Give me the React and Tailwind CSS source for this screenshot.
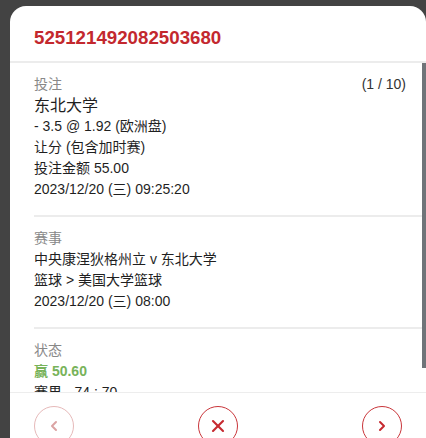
import { X, ChevronLeft, ChevronRight } from 'lucide-react'

const font = { fontFamily: '"Liberation Sans", "Noto Sans CJK SC", sans-serif' }

function Section({ label, right, children, last }) {
  return (
    <div className={`pt-[11px] pb-[15px] pr-[16px] ${last ? '' : 'border-b-2 border-[#ececec]'}`}>
      <div className="flex justify-between text-[14px] leading-[21px]">
        <span className="text-[#888]">{label}</span>
        {right && <span className="text-[#333]">{right}</span>}
      </div>
      <div className="text-[14px] leading-[21px] text-[#1f1f1f]">{children}</div>
    </div>
  )
}

function RoundBtn({ children, faded }) {
  return (
    <button
      className={`w-[40px] h-[40px] rounded-full border flex items-center justify-center ${
        faded ? 'border-[#e6b9b9] text-[#dba3a3]' : 'border-[#c9353a] text-[#c62a30]'
      }`}
    >
      {children}
    </button>
  )
}

export default function App() {
  return (
    <div className="h-[438px] overflow-hidden bg-[#434343] pt-[6px] pl-[10px]" style={font}>
      <div className="w-[416px] h-[452px] bg-white rounded-t-[16px] flex flex-col">
        <div className="pt-[20px] pb-[12px] px-[24px] border-b-2 border-[#ececec]">
          <h3 className="text-[18.72px] leading-[23px] font-bold text-[#c3282e]">525121492082503680</h3>
        </div>

        <div className="h-[329px] flex overflow-hidden">
          <div className="flex-1 pl-[24px]">
            <Section label="投注" right="(1 / 10)">
              <div className="text-[16px]">东北大学</div>
              <div>- 3.5 @ 1.92 (欧洲盘)</div>
              <div>让分 (包含加时赛)</div>
              <div>投注金额 55.00</div>
              <div>2023/12/20 (三) 09:25:20</div>
            </Section>
            <Section label="赛事">
              <div>中央康涅狄格州立 v 东北大学</div>
              <div>篮球 &gt; 美国大学篮球</div>
              <div>2023/12/20 (三) 08:00</div>
            </Section>
            <Section label="状态" last>
              <div className="font-bold text-[#78b35a]">赢 50.60</div>
              <div>赛果 - 74 : 70</div>
            </Section>
          </div>
          <div className="w-[4px] bg-white">
            <div className="h-[305px] bg-[#6f7479]" />
          </div>
        </div>

        <div className="border-t border-[#ededed] pt-[13px] px-[24px] flex justify-between">
          <RoundBtn faded>
            <ChevronLeft className="w-[16px] h-[16px]" strokeWidth={3} />
          </RoundBtn>
          <RoundBtn>
            <X className="w-[20px] h-[20px]" strokeWidth={2.5} />
          </RoundBtn>
          <RoundBtn>
            <ChevronRight className="w-[16px] h-[16px]" strokeWidth={3} />
          </RoundBtn>
        </div>
      </div>
    </div>
  )
}
